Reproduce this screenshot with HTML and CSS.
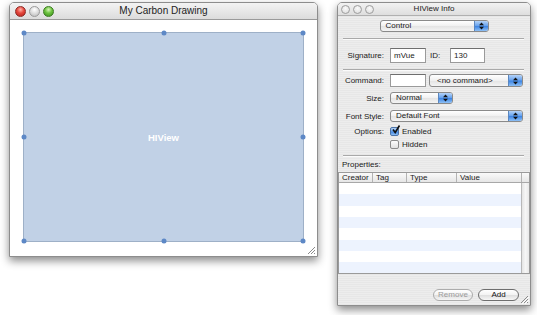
FILE: index.html
```html
<!DOCTYPE html>
<html lang="en">
<head>
    <meta charset="UTF-8">
    <title>My Carbon Drawing</title>
    <link rel="stylesheet" href="styles.css">
</head>
<body>

    <!-- Dokumentfenster -->
    <div class="window doc-window">
        <div class="titlebar doc-titlebar">
            <div class="lights">
                <span class="light red"></span>
                <span class="light grey"></span>
                <span class="light green"></span>
            </div>
            <div class="title">My Carbon Drawing</div>
            <div></div>
        </div>
        <div class="doc-content">
            <div class="hiview">
                HIView
                <span class="handle tl"></span>
                <span class="handle tm"></span>
                <span class="handle tr"></span>
                <span class="handle ml"></span>
                <span class="handle mr"></span>
                <span class="handle bl"></span>
                <span class="handle bm"></span>
                <span class="handle br"></span>
            </div>
        </div>
        <svg class="grip" width="10" height="10" viewBox="0 0 10 10">
            <path d="M9 2L2 9M9 5L5 9M9 8L8 9" stroke="#8a8a8a" stroke-width="1"/>
            <path d="M10 3L3 10M10 6L6 10" stroke="#fff" stroke-width="1"/>
        </svg>
    </div>

    <!-- Info-Fenster -->
    <div class="window info-window">
        <div class="titlebar info-titlebar">
            <div class="lights small">
                <span class="light hollow"></span>
                <span class="light hollow"></span>
                <span class="light hollow"></span>
            </div>
            <div class="title small-title">HIView Info</div>
            <div></div>
        </div>

        <div class="info-content">
            <div class="popup control-popup">
                <span class="popup-label">Control</span>
                <span class="popup-arrows"><svg width="5" height="8" viewBox="0 0 5 8"><path d="M0 3.2L2.5 0.5L5 3.2ZM0 4.8L2.5 7.5L5 4.8Z" fill="#111"/></svg></span>
            </div>

            <div class="separator sep-1"></div>

            <div class="form-row sig-row">
                <label class="label">Signature:</label>
                <div class="row-fields">
                    <div class="field sig-field">mVue</div>
                    <span class="id-label">ID:</span>
                    <div class="field id-field">130</div>
                </div>
            </div>

            <div class="separator sep-2"></div>

            <div class="form-row cmd-row">
                <label class="label">Command:</label>
                <div class="row-fields">
                    <div class="field cmd-field"></div>
                    <div class="popup cmd-popup">
                        <span class="popup-label">&lt;no command&gt;</span>
                        <span class="popup-arrows"><svg width="5" height="8" viewBox="0 0 5 8"><path d="M0 3.2L2.5 0.5L5 3.2ZM0 4.8L2.5 7.5L5 4.8Z" fill="#111"/></svg></span>
                    </div>
                </div>
            </div>

            <div class="form-row size-row">
                <label class="label">Size:</label>
                <div class="row-fields">
                    <div class="popup size-popup">
                        <span class="popup-label">Normal</span>
                        <span class="popup-arrows"><svg width="5" height="8" viewBox="0 0 5 8"><path d="M0 3.2L2.5 0.5L5 3.2ZM0 4.8L2.5 7.5L5 4.8Z" fill="#111"/></svg></span>
                    </div>
                </div>
            </div>

            <div class="form-row font-row">
                <label class="label">Font Style:</label>
                <div class="row-fields">
                    <div class="popup font-popup">
                        <span class="popup-label">Default Font</span>
                        <span class="popup-arrows"><svg width="5" height="8" viewBox="0 0 5 8"><path d="M0 3.2L2.5 0.5L5 3.2ZM0 4.8L2.5 7.5L5 4.8Z" fill="#111"/></svg></span>
                    </div>
                </div>
            </div>

            <div class="form-row check-row">
                <label class="label">Options:</label>
                <div class="row-fields">
                    <span class="checkbox checked"><svg width="10" height="10" viewBox="0 0 10 10"><path d="M2 4.5L4.2 7.5L8.5 0.5" fill="none" stroke="#111" stroke-width="1.6"/></svg></span>
                    <span class="check-label">Enabled</span>
                </div>
            </div>

            <div class="form-row check-row hidden-row">
                <label class="label"></label>
                <div class="row-fields">
                    <span class="checkbox"></span>
                    <span class="check-label">Hidden</span>
                </div>
            </div>

            <div class="separator sep-3"></div>

            <div class="props-label">Properties:</div>

            <div class="table">
                <div class="table-head">
                    <span class="col col-creator">Creator</span>
                    <span class="col col-tag">Tag</span>
                    <span class="col col-type">Type</span>
                    <span class="col col-value">Value</span>
                    <span class="col col-corner"></span>
                </div>
                <div class="table-body">
                    <div class="rows"></div>
                    <div class="scroll-track"></div>
                </div>
            </div>

            <div class="button-bar">
                <button class="pill disabled">Remove</button>
                <button class="pill">Add</button>
            </div>
        </div>
        <svg class="grip" width="10" height="10" viewBox="0 0 10 10">
            <path d="M9 2L2 9M9 5L5 9M9 8L8 9" stroke="#8a8a8a" stroke-width="1"/>
            <path d="M10 3L3 10M10 6L6 10" stroke="#fff" stroke-width="1"/>
        </svg>
    </div>

</body>
</html>
```

FILE: styles.css
```css
body {
    margin: 0;
    padding: 0;
    background: #fff;
    font-family: "Liberation Sans", Arial, sans-serif;
    color: #1a1a1a;
    width: 537px;
    height: 315px;
    position: relative;
    overflow: hidden;
}

.window {
    position: absolute;
    box-sizing: border-box;
    border: 1px solid #8d8d8d;
    border-radius: 5px 5px 0 0;
    box-shadow: 0 4px 9px rgba(0, 0, 0, 0.45);
    display: flex;
    flex-direction: column;
    overflow: hidden;
}

.doc-window {
    left: 9px;
    top: 2px;
    width: 309px;
    height: 255px;
    background: #fff;
}

.info-window {
    left: 337px;
    top: 2px;
    width: 194px;
    height: 304px;
    background: repeating-linear-gradient(to bottom, #ededed 0, #ededed 1px, #e7e7e7 1px, #e7e7e7 2px);
}

/* Titelleiste */
.titlebar {
    display: grid;
    grid-template-columns: 1fr auto 1fr;
    align-items: center;
    box-sizing: border-box;
    border-bottom: 1px solid #9a9a9a;
}

.doc-titlebar {
    height: 17px;
    background: linear-gradient(#f3f3f3, #dcdcdc);
}

.info-titlebar {
    height: 13px;
    background: linear-gradient(#f2f2f2, #dedede);
    border-bottom-color: #b0b0b0;
}

.title {
    font-size: 10px;
    color: #222;
    line-height: 12px;
}

.small-title {
    font-size: 8px;
    line-height: 10px;
}

.lights {
    display: flex;
    gap: 3px;
    padding-left: 5px;
}

.lights.small {
    gap: 3px;
    padding-left: 3px;
}

.light {
    display: block;
    width: 11px;
    height: 11px;
    border-radius: 50%;
    box-sizing: border-box;
}

.light.red {
    background: radial-gradient(circle at 50% 30%, #ffb3a8 0, #e5473d 45%, #b3201a 100%);
    border: 1px solid #8d2a25;
}

.light.grey {
    background: radial-gradient(circle at 50% 30%, #ffffff 0, #dcdcdc 50%, #b5b5b5 100%);
    border: 1px solid #9a9a9a;
}

.light.green {
    background: radial-gradient(circle at 50% 30%, #d6f5b5 0, #6cc23f 45%, #3a8d1c 100%);
    border: 1px solid #3b7a20;
}

.light.hollow {
    width: 9px;
    height: 9px;
    background: radial-gradient(circle at 50% 35%, #fafafa 0, #e4e4e4 70%);
    border: 1px solid #9c9c9c;
}

/* Dokumentinhalt */
.doc-content {
    flex: 1;
    padding: 12px 13px 0 13px;
    background: #fff;
}

.hiview {
    position: relative;
    box-sizing: border-box;
    width: 281px;
    height: 210px;
    background: #c1d1e6;
    border: 1px solid #9eb0c7;
    display: flex;
    align-items: center;
    justify-content: center;
    color: #fff;
    font-weight: bold;
    font-size: 9.5px;
}

.handle {
    position: absolute;
    width: 5px;
    height: 5px;
    border-radius: 50%;
    background: #5d88c6;
    transform: translate(-50%, -50%);
}

.handle.tl { left: 0; top: 0; }
.handle.tm { left: 50%; top: 0; }
.handle.tr { left: 100%; top: 0; }
.handle.ml { left: 0; top: 50%; }
.handle.mr { left: 100%; top: 50%; }
.handle.bl { left: 0; top: 100%; }
.handle.bm { left: 50%; top: 100%; }
.handle.br { left: 100%; top: 100%; }

.grip {
    position: absolute;
    right: 1px;
    bottom: 1px;
}

/* Info-Fenster Inhalt */
.info-content {
    flex: 1;
    display: flex;
    flex-direction: column;
    font-size: 8px;
}

.popup {
    display: flex;
    box-sizing: border-box;
    height: 12px;
    border: 1px solid #8a8a8a;
    border-radius: 3px;
    background: linear-gradient(#ffffff, #f0f0f0 50%, #e3e3e3 51%, #f4f4f4);
    overflow: hidden;
}

.popup-label {
    flex: 1;
    padding-left: 5px;
    line-height: 10px;
    font-size: 8px;
    white-space: nowrap;
}

.popup-arrows {
    width: 13px;
    display: flex;
    align-items: center;
    justify-content: center;
    background: linear-gradient(#b5d3f7, #6aa4ee 45%, #3f86e4 55%, #8ec0f5);
    border-left: 1px solid #5a86bf;
}

.control-popup {
    margin: 4px auto 0 auto;
    width: 109px;
}

.separator {
    height: 1px;
    margin: 0 6px 0 5px;
    background: #a9a9a9;
    border-bottom: 1px solid #fbfbfb;
}

.sep-1 { margin-top: 6px; }
.sep-2 { margin-top: 6px; }
.sep-3 { margin-top: 5px; }

.form-row {
    display: grid;
    grid-template-columns: 46px 1fr;
    column-gap: 6px;
    align-items: center;
}

.label {
    text-align: right;
    white-space: nowrap;
    font-size: 8px;
}

.row-fields {
    display: flex;
    align-items: center;
}

.field {
    box-sizing: border-box;
    background: #fff;
    border: 1px solid #9a9a9a;
    border-top-color: #6e6e6e;
    font-size: 8px;
    padding-left: 3px;
}

.sig-row {
    margin-top: 8px;
    height: 15px;
}

.sig-field {
    width: 36px;
    height: 15px;
    line-height: 13px;
}

.id-label {
    margin-left: 4px;
    width: 20px;
}

.id-field {
    width: 35px;
    height: 15px;
    line-height: 13px;
}

.cmd-row {
    margin-top: 3px;
    height: 13px;
}

.cmd-field {
    width: 36px;
    height: 13px;
}

.cmd-popup {
    margin-left: 3px;
    width: 94px;
    height: 13px;
}

.cmd-popup .popup-label {
    line-height: 11px;
    padding-left: 7px;
}

.size-row {
    margin-top: 5px;
    height: 12px;
}

.size-popup {
    width: 63px;
}

.font-row {
    margin-top: 6px;
    height: 12px;
}

.font-popup {
    width: 133px;
}

.check-row {
    margin-top: 4px;
    height: 11px;
}

.hidden-row {
    margin-top: 2px;
}

.checkbox {
    box-sizing: border-box;
    width: 9px;
    height: 9px;
    border: 1px solid #8c8c8c;
    border-radius: 2px;
    background: linear-gradient(#fdfdfd, #e2e2e2);
    position: relative;
}

.checkbox.checked {
    background: linear-gradient(#b5d3f7, #5d9be9 50%, #3b80de 51%, #8ec0f5);
    border-color: #4d74a8;
}

.checkbox svg {
    position: absolute;
    left: 0;
    top: -3px;
}

.check-label {
    margin-left: 3px;
    font-size: 8px;
}

.props-label {
    margin-top: 3px;
    padding-left: 4px;
    height: 10px;
    line-height: 10px;
}

/* Tabelle */
.table {
    margin-top: 2px;
    height: 102px;
    box-sizing: border-box;
    border: 1px solid #9a9a9a;
    background: #fff;
    display: flex;
    flex-direction: column;
}

.table-head {
    display: flex;
    height: 9px;
    border-bottom: 1px solid #a8a8a8;
    background: linear-gradient(#fafafa, #e6e6e6);
}

.col {
    box-sizing: border-box;
    border-right: 1px solid #b3b3b3;
    padding-left: 3px;
    line-height: 9px;
    font-size: 8px;
}

.col-creator { width: 34px; }
.col-tag { width: 34px; }
.col-type { width: 50px; }
.col-value { width: 65px; }
.col-corner { flex: 1; border-right: none; }

.table-body {
    flex: 1;
    display: flex;
}

.rows {
    flex: 1;
    background: repeating-linear-gradient(to bottom, #ffffff 0, #ffffff 11.3px, #edf3fe 11.3px, #edf3fe 22.6px);
}

.scroll-track {
    width: 7px;
    border-left: 1px solid #b8b8b8;
    background: linear-gradient(to right, #e4e4e4, #f6f6f6 50%, #e8e8e8);
}

/* Knöpfe */
.button-bar {
    display: flex;
    justify-content: flex-end;
    gap: 5px;
    margin-top: 15px;
    padding-right: 11px;
}

.pill {
    box-sizing: border-box;
    height: 12px;
    padding: 0;
    border: 1px solid #6e6e6e;
    border-radius: 6px;
    background: linear-gradient(#ffffff, #f2f2f2 50%, #dedede 51%, #f6f6f6);
    font-family: "Liberation Sans", Arial, sans-serif;
    font-size: 8px;
    line-height: 10px;
    color: #111;
    width: 41px;
}

.pill.disabled {
    width: 40px;
    border-color: #acacac;
    color: #9a9a9a;
}
```
